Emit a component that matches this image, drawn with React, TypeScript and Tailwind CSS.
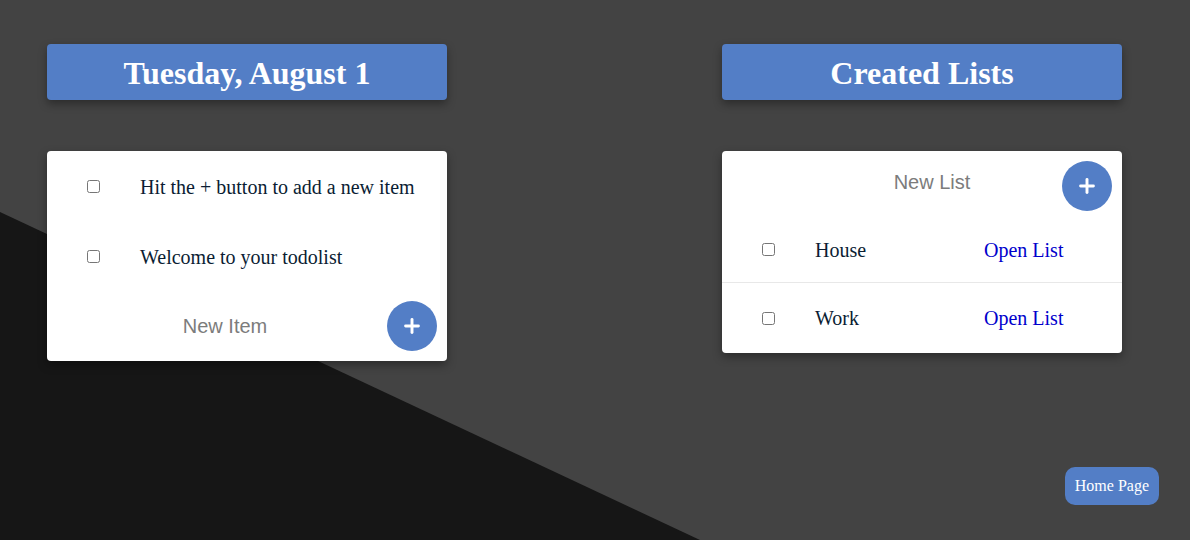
import { Plus } from "lucide-react";

const items = ["Hit the + button to add a new item", "Welcome to your todolist"];
const lists = ["House", "Work"];

function Header({ title }: { title: string }) {
  return (
    <div className="flex h-[56px] w-[400px] items-center justify-center rounded-[4px] bg-[#537ec6] shadow-[0_4px_8px_rgba(0,0,0,0.35)]">
      <h1 className="pt-[2px] text-[32px] font-bold leading-none text-white">{title}</h1>
    </div>
  );
}

function AddButton() {
  return (
    <button
      type="button"
      className="flex h-[50px] w-[50px] shrink-0 items-center justify-center rounded-full bg-[#537ec6] text-white"
    >
      <Plus size={22} strokeWidth={3.2} />
    </button>
  );
}

export default function App() {
  return (
    <div className="relative h-[540px] w-full overflow-hidden bg-[#434343] font-['Liberation_Serif',serif]">
      <svg
        className="absolute inset-0 h-full w-full"
        viewBox="0 0 1190 540"
        preserveAspectRatio="none"
      >
        <polygon points="0,212 700,540 0,540" fill="#161616" />
      </svg>

      <div className="relative flex gap-[275px] pl-[47px] pt-[44px]">
        {/* today column */}
        <div className="flex flex-col gap-[51px]">
          <Header title="Tuesday, August 1" />
          <div className="w-[400px] rounded-[4px] bg-white shadow-[0_4px_10px_rgba(0,0,0,0.35)]">
            {items.map((t) => (
              <div key={t} className="flex h-[70px] items-center">
                <input type="checkbox" className="ml-[40px] h-[13px] w-[13px]" />
                <span className="ml-[40px] pt-[2px] text-[20px] text-[#0b1d33]">{t}</span>
              </div>
            ))}
            <div className="flex h-[70px] items-center pr-[10px]">
              <span className="flex-1 pl-[16px] text-center font-['Liberation_Sans',sans-serif] text-[20px] text-[#7c7c7c]">
                New Item
              </span>
              <AddButton />
            </div>
          </div>
        </div>

        {/* lists column */}
        <div className="flex flex-col gap-[51px]">
          <Header title="Created Lists" />
          <div className="w-[400px] rounded-[4px] bg-white shadow-[0_4px_10px_rgba(0,0,0,0.35)]">
            <div className="flex h-[66px] items-start pr-[10px]">
              <span className="flex-1 pl-[80px] pt-[18px] text-center font-['Liberation_Sans',sans-serif] text-[20px] leading-[26px] text-[#7c7c7c]">
                New List
              </span>
              <div className="mt-[10px]">
                <AddButton />
              </div>
            </div>
            {lists.map((l, i) => (
              <div
                key={l}
                className={`flex items-center ${i === 0 ? "h-[66px] border-b border-[#e8e8e8]" : "h-[70px]"}`}
              >
                <input type="checkbox" className="ml-[40px] h-[13px] w-[13px]" />
                <span className="ml-[40px] w-[169px] text-[20px] text-[#0b1d33]">{l}</span>
                <a className="text-[20px] text-[#0000cc]">Open List</a>
              </div>
            ))}
          </div>
        </div>
      </div>

      <button
        type="button"
        className="absolute bottom-[35px] right-[31px] flex h-[38px] items-center rounded-[10px] bg-[#537ec6] px-[10px] text-[16px] text-white"
      >
        Home Page
      </button>
    </div>
  );
}
